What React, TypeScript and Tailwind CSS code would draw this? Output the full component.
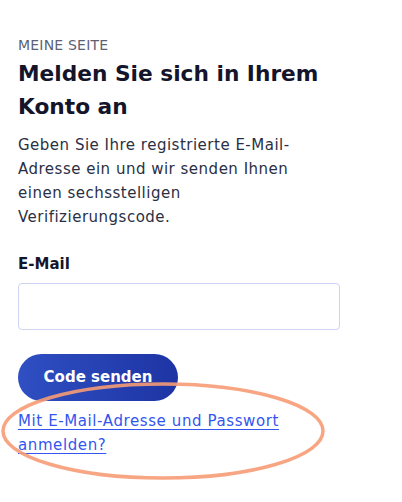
export default function App() {
  return (
    <div className="relative min-h-screen w-[402px] bg-white font-['DejaVu_Sans',sans-serif]">
      <div className="px-[18px] pt-[36px]">
        <p className="text-[14px] leading-[18px] tracking-[0.2px] text-[#5b6276]">MEINE SEITE</p>
        <h1 className="mt-[3px] text-[21.7px] font-bold leading-[33px] text-[#14142b]">
          Melden Sie sich in Ihrem
          <br />
          Konto an
        </h1>
        <p className="mt-[10px] text-[15px] leading-[24px] tracking-[0.5px] text-[#2a2f45]">
          Geben Sie Ihre registrierte E-Mail-
          <br />
          Adresse ein und wir senden Ihnen
          <br />
          einen sechsstelligen
          <br />
          Verifizierungscode.
        </p>

        <label className="mt-[25px] block text-[15px] font-semibold leading-[20px] text-[#14142b]">E-Mail</label>
        <input
          type="email"
          className="mt-[9px] block h-[47px] w-[322px] rounded-[4px] border border-[#cdd3f0] bg-white px-3 outline-none"
        />

        <button
          type="button"
          className="mt-[24px] h-[47px] w-[160px] rounded-full bg-gradient-to-r from-[#2f4fc2] to-[#1e34a4] text-[15px] font-bold text-white"
        >
          Code senden
        </button>

        <div className="mt-[8px]">
          <a
            href="#"
            className="text-[15px] leading-[23px] tracking-[0.6px] text-[#3356ee] underline underline-offset-[3px]"
          >
            Mit E-Mail-Adresse und Passwort
            <br />
            anmelden?
          </a>
        </div>
      </div>

      <svg className="pointer-events-none absolute left-0 top-[380px]" width="330" height="104" viewBox="0 0 330 104">
        <ellipse cx="163" cy="51" rx="160" ry="47" fill="none" stroke="#f69b74" strokeWidth="3.5" opacity="0.9" />
      </svg>
    </div>
  );
}
